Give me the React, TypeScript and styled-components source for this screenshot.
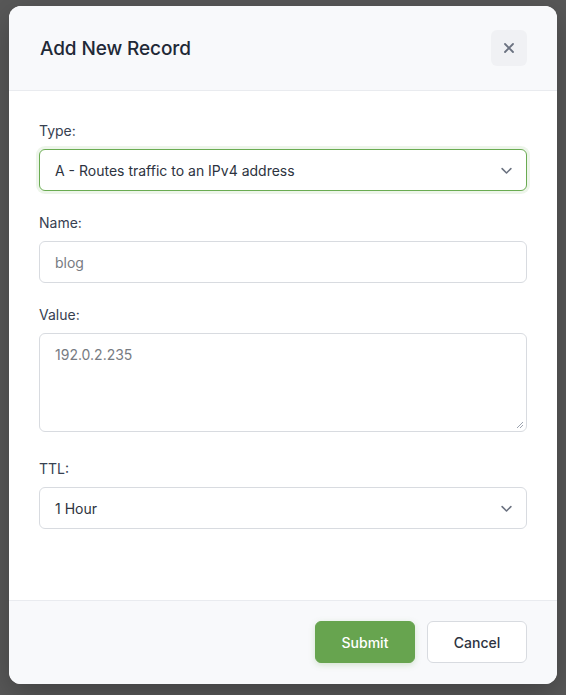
import React from 'react';
import styled, { createGlobalStyle } from 'styled-components';

const GlobalStyle = createGlobalStyle`
    html, body {
        margin: 0;
        padding: 0;
        background: #585858;
        font-family: Inter, "Open Sans", "Liberation Sans", sans-serif;
    }
    * { box-sizing: border-box; }
`;

const Backdrop = styled.div`
    min-height: 695px;
    padding: 6px 9px 0;
    background: #585858;
`;

const Modal = styled.div`
    width: 548px;
    height: 678px;
    display: flex;
    flex-direction: column;
    background: #ffffff;
    border-radius: 12px;
    overflow: hidden;
    box-shadow: 0 10px 30px rgba(0, 0, 0, 0.25);
`;

const Header = styled.div`
    display: flex;
    align-items: center;
    justify-content: space-between;
    padding: 24px 30px 24px 31px;
    background: #f8f9fb;
    border-bottom: 1px solid #e9ebef;
`;

const Title = styled.h2`
    margin: 0;
    font-size: 19px;
    font-weight: 500;
    color: #1f2937;
    letter-spacing: -0.1px;
`;

const CloseButton = styled.button`
    width: 36px;
    height: 36px;
    display: flex;
    align-items: center;
    justify-content: center;
    padding: 0;
    border: none;
    border-radius: 6px;
    background: #f0f1f4;
    color: #6b7280;
    cursor: pointer;
`;

const Body = styled.div`
    flex: 1;
    display: flex;
    flex-direction: column;
    gap: 22px;
    padding: 30px 30px 0 30px;
`;

const Field = styled.div`
    display: flex;
    flex-direction: column;
    gap: 8px;
`;

const Label = styled.label<{ $extraTop?: number }>`
    display: block;
    font-size: 14px;
    line-height: 20px;
    color: #374151;
    margin-top: ${p => p.$extraTop ?? 0}px;
`;

const SelectBox = styled.div<{ $focused?: boolean }>`
    height: 42px;
    display: flex;
    align-items: center;
    justify-content: space-between;
    padding: 0 12px 0 15px;
    border: 1px solid ${p => (p.$focused ? '#6aab52' : '#d8dbe0')};
    border-radius: 6px;
    background: #ffffff;
    box-shadow: ${p => (p.$focused ? '0 0 0 3px rgba(106, 171, 82, 0.12)' : 'none')};
    font-size: 14px;
    color: #2d3340;
`;

const TextInput = styled.div`
    height: 42px;
    display: flex;
    align-items: center;
    padding: 0 15px;
    border: 1px solid #d8dbe0;
    border-radius: 6px;
    font-size: 14px;
    color: #777b82;
`;

const TextArea = styled.div`
    position: relative;
    height: 99px;
    padding: 12px 15px;
    border: 1px solid #d8dbe0;
    border-radius: 6px;
    font-size: 14px;
    line-height: 18px;
    color: #777b82;
`;

const Grip = styled.svg`
    position: absolute;
    right: 2px;
    bottom: 2px;
`;

const Footer = styled.div`
    display: flex;
    justify-content: flex-end;
    gap: 12px;
    padding: 20px 30px 21px;
    background: #f8f9fb;
    border-top: 1px solid #e9ebef;
`;

const Button = styled.button<{ $primary?: boolean }>`
    width: 100px;
    height: 42px;
    border-radius: 6px;
    font-family: inherit;
    font-size: 14px;
    font-weight: 500;
    cursor: pointer;
    border: 1px solid ${p => (p.$primary ? '#67a44f' : '#d8dbe0')};
    background: ${p => (p.$primary ? '#67a44f' : '#ffffff')};
    color: ${p => (p.$primary ? '#ffffff' : '#2d3340')};
    box-shadow: ${p => (p.$primary ? '0 2px 6px rgba(103, 164, 79, 0.25)' : 'none')};
`;

const Chevron = () => (
    <svg width="15" height="15" viewBox="0 0 24 24" fill="none" stroke="#6b7280" strokeWidth="2.5" strokeLinecap="round" strokeLinejoin="round">
        <polyline points="5 9 12 16 19 9" />
    </svg>
);

export default function App() {
    return (
        <>
            <GlobalStyle />
            <Backdrop>
                <Modal>
                    <Header>
                        <Title>Add New Record</Title>
                        <CloseButton aria-label="Close">
                            <svg width="12" height="12" viewBox="0 0 12 12" stroke="#6b7280" strokeWidth="1.8" strokeLinecap="round">
                                <line x1="2" y1="2" x2="10" y2="10" />
                                <line x1="10" y1="2" x2="2" y2="10" />
                            </svg>
                        </CloseButton>
                    </Header>

                    <Body>
                        <Field>
                            <Label>Type:</Label>
                            <SelectBox $focused>
                                <span>A - Routes traffic to an IPv4 address</span>
                                <Chevron />
                            </SelectBox>
                        </Field>

                        <Field>
                            <Label>Name:</Label>
                            <TextInput>blog</TextInput>
                        </Field>

                        <Field>
                            <Label>Value:</Label>
                            <TextArea>
                                192.0.2.235
                                <Grip width="8" height="8" viewBox="0 0 8 8" stroke="#9ca3af" strokeWidth="1">
                                    <line x1="7" y1="1" x2="1" y2="7" />
                                    <line x1="7" y1="4" x2="4" y2="7" />
                                </Grip>
                            </TextArea>
                        </Field>

                        <Field>
                            <Label $extraTop={5}>TTL:</Label>
                            <SelectBox>
                                <span>1 Hour</span>
                                <Chevron />
                            </SelectBox>
                        </Field>
                    </Body>

                    <Footer>
                        <Button $primary>Submit</Button>
                        <Button>Cancel</Button>
                    </Footer>
                </Modal>
            </Backdrop>
        </>
    );
}
